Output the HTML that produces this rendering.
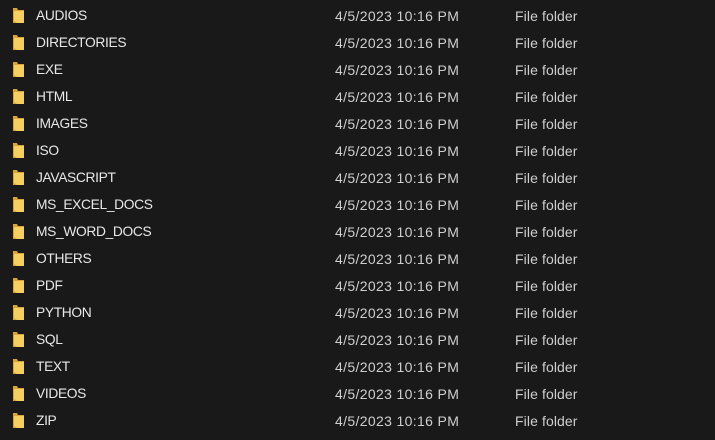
<!DOCTYPE html><html><head><style>
body{margin:0;background:#191919;width:715px;height:440px;overflow:hidden;font-family:"Liberation Sans",sans-serif;font-size:14px;}
.r{position:absolute;left:0;height:27px;width:715px;}
.r svg{position:absolute;left:13px;top:0px}
.n{position:absolute;left:36px;top:1px;color:#e8e8e8;line-height:16px;font-size:13.8px;letter-spacing:-0.35px}
.d{position:absolute;left:335px;top:1px;color:#cfcfcf;line-height:16px;letter-spacing:0.35px}
.t{position:absolute;left:515px;top:1px;color:#cfcfcf;line-height:16px;letter-spacing:0.1px}
</style></head><body>
<div id="c"></div>
<script>
var n=["AUDIOS","DIRECTORIES","EXE","HTML","IMAGES","ISO","JAVASCRIPT","MS_EXCEL_DOCS","MS_WORD_DOCS","OTHERS","PDF","PYTHON","SQL","TEXT","VIDEOS","ZIP"],h="";
n.forEach(function(s,i){var y=7+i*27;h+='<div class="r" style="top:'+y+'px"><svg width="12" height="16" viewBox="0 0 12 16"><path d="M0 1h4l1 2h6v13H0z" fill="#d9a53a"/><path d="M1 4h10v12H4l-3-2z" fill="#f6cf62"/></svg><span class="n">'+s+'</span><span class="d">4/5/2023 10:16 PM</span><span class="t">File folder</span></div>';});
document.getElementById("c").innerHTML=h;
</script></body></html>
